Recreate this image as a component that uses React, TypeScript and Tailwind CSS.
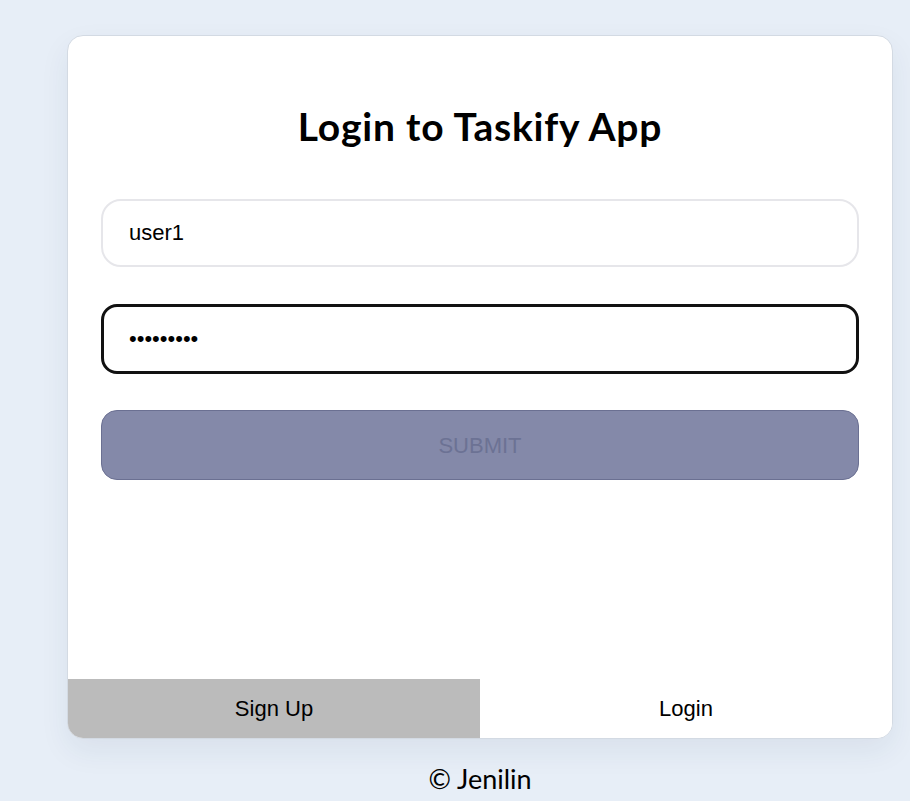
import React from 'react';

export default function App() {
  return (
    <div className="min-h-[801px] w-full bg-[#e7eef7] pt-[35px]" style={{ fontFamily: '"Liberation Sans", Arial, sans-serif' }}>
      <div className="ml-[67px] w-[826px]">
        {/* Card */}
        <div className="flex h-[704px] flex-col overflow-hidden rounded-[16px] border border-[#d3dae3] bg-white shadow-[0_12px_30px_rgba(30,50,90,0.07)]">
          <div className="flex-1 px-[33px] pt-[62px]">
            <h1
              className="text-center text-[39px] font-bold leading-[56px] tracking-[0.8px] text-black"
              style={{ fontFamily: '"Trebuchet MS", Lato, "Open Sans", sans-serif' }}
            >
              Login to Taskify App
            </h1>

            <form className="mt-[45px] flex flex-col" onSubmit={(e) => e.preventDefault()}>
              <input
                type="text"
                defaultValue="user1"
                className="h-[68px] w-full rounded-[20px] border-2 border-[#e6e6ea] bg-white pl-[26px] text-[22px] text-black outline-none"
              />
              <input
                type="password"
                defaultValue="123456789"
                className="mt-[37px] h-[70px] w-full rounded-[16px] border-[3px] border-[#111] bg-white pl-[25px] text-[22px] text-black outline-none"
              />
              <button
                type="submit"
                disabled
                className="mt-[36px] h-[70px] w-full rounded-[16px] border border-[#6b7092] bg-[#8489a9] text-[22px] text-[#6c7294]"
              >
                SUBMIT
              </button>
            </form>
          </div>

          {/* Tabs */}
          <div className="grid h-[59px] grid-cols-2 text-[22px] text-black">
            <button className="flex items-center justify-center bg-[#bbbbbb]">Sign Up</button>
            <button className="flex items-center justify-center bg-white">Login</button>
          </div>
        </div>

        <p
          className="mt-[25px] text-center text-[27px] leading-[30px] text-black"
          style={{ fontFamily: '"Trebuchet MS", Lato, "Open Sans", sans-serif' }}
        >
          © Jenilin
        </p>
      </div>
    </div>
  );
}
